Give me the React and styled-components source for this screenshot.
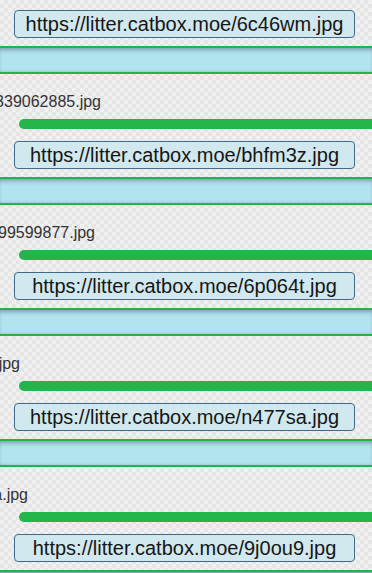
import React from 'react';
import styled, { createGlobalStyle } from 'styled-components';

const GlobalStyle = createGlobalStyle`
  html, body {
    margin: 0;
    padding: 0;
    overflow: hidden;
  }
  body {
    font-family: "Liberation Sans", Arial, sans-serif;
    background-color: #ededed;
    background-image: repeating-conic-gradient(#e5e5e5 0% 25%, #f0f0f0 0% 50%);
    background-size: 8px 8px;
  }
`

const Page = styled.div`
  display: flex;
  flex-direction: column;
  padding-top: 10px;
  width: 372px;
`

const LinkBox = styled.div`
  box-sizing: border-box;
  width: 341px;
  height: 28px;
  margin-left: 14px;
  margin-top: ${p => p.$first ? 0 : 12}px;
  display: flex;
  align-items: center;
  justify-content: center;
  background: #d1e8ee;
  border: 1px solid #3f6b88;
  border-radius: 4px;
  font-size: 20px;
  color: #161616;
  white-space: nowrap;
`

const Separator = styled.div`
  height: 24px;
  margin-top: 8px;
  background: #b1e4ee;
  border-top: 2px solid #24b34b;
  border-bottom: 2px solid #24b34b;
  box-shadow: inset 0 4px 4px -2px rgba(60, 70, 90, 0.45), inset 0 -2px 3px -2px rgba(60, 70, 90, 0.3);
`

const FileName = styled.div`
  display: flex;
  justify-content: flex-end;
  overflow: hidden;
  width: ${p => p.$end}px;
  margin-top: 19px;
  height: 18px;
  line-height: 18px;
  font-size: 16px;
  color: #333;
  white-space: nowrap;
`

const Progress = styled.div`
  height: 10px;
  margin-top: 8px;
  margin-left: 19px;
  margin-right: -20px;
  background: #24b54a;
  border-radius: 5px;
`

const items = [
  { file: '1712339062885.jpg', end: 101, link: 'https://litter.catbox.moe/bhfm3z.jpg' },
  { file: '1712399599877.jpg', end: 95, link: 'https://litter.catbox.moe/6p064t.jpg' },
  { file: 'screenshot_main.jpg', end: 20, link: 'https://litter.catbox.moe/n477sa.jpg' },
  { file: 'image_data.jpg', end: 28, link: 'https://litter.catbox.moe/9j0ou9.jpg' },
]

export default function App() {
  return (
    <Page>
      <GlobalStyle />
      <LinkBox $first>https://litter.catbox.moe/6c46wm.jpg</LinkBox>
      {items.map(item => (
        <React.Fragment key={item.link}>
          <Separator />
          <FileName $end={item.end}><span>{item.file}</span></FileName>
          <Progress />
          <LinkBox>{item.link}</LinkBox>
        </React.Fragment>
      ))}
      <Separator />
    </Page>
  );
}
